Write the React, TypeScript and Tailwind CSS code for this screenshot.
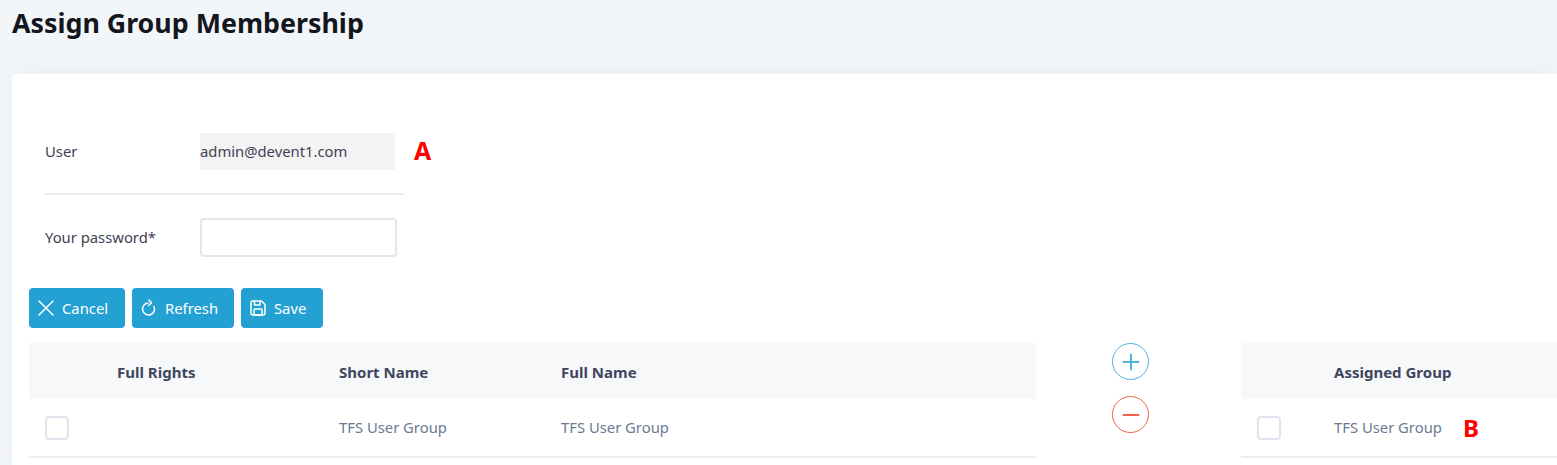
import React from 'react';

const font = "font-['Noto_Sans','Open_Sans',sans-serif]";

const ActionButton: React.FC<{ label: string; width: string; children: React.ReactNode }> = ({ label, width, children }) => (
  <button className={`flex h-10 items-center gap-[7px] rounded-[4px] bg-[#23a1d3] pl-2 text-[14.8px] text-white ${width}`}>
    <svg viewBox="0 0 18 18" fill="none" stroke="currentColor" strokeWidth="1.5" strokeLinecap="round" strokeLinejoin="round" className="h-[18px] w-[18px] shrink-0">
      {children}
    </svg>
    <span>{label}</span>
  </button>
);

const Checkbox = () => (
  <span className="block h-6 w-6 rounded-[4px] border-2 border-[#dfe3ec] bg-white" />
);

export default function App() {
  return (
    <div className={`h-[465px] w-[1557px] overflow-hidden bg-[#f3f6f9] pl-3 ${font}`}>
      <h1 className="h-[74px] pt-[4px] text-[26.8px] leading-[38px] font-bold text-[#14161f]">Assign Group Membership</h1>

      <div className="h-[391px] rounded-tl-[4px] bg-white pt-[59px] pl-[17px] shadow-[0_0_20px_rgba(82,63,105,0.06)]">
        <div className="ml-4 w-[360px]">
          <div className="flex h-[37px] items-center">
            <span className="w-[155px] shrink-0 text-[14.8px] text-[#3f4254]">User</span>
            <span className="flex h-full w-[195px] shrink-0 items-center bg-[#f3f3f3] text-[14.8px] text-[#3f4254]">admin@devent1.com</span>
            <span className="mb-[2px] ml-[19px] shrink-0 text-[25px] leading-none font-bold text-[#ff0000]">A</span>
          </div>
          <div className="mt-[23px] h-[2px] bg-[#ebedf3]" />
          <div className="mt-[23px] flex h-[39px] items-center">
            <span className="w-[155px] shrink-0 text-[14.8px] text-[#3f4254]">Your password*</span>
            <input className="h-full w-[197px] shrink-0 rounded-[4px] border-2 border-[#e4e6ef] bg-white outline-none" />
          </div>
        </div>

        <div className="mt-[31px] flex gap-[7px]">
          <ActionButton label="Cancel" width="w-[96px]">
            <path d="M2 2 L16 16 M16 2 L2 16" />
          </ActionButton>
          <ActionButton label="Refresh" width="w-[102px]">
            <path d="M8 4 A6 6 0 1 0 14 7.5" />
            <path d="M9 1 L11.5 4 L8.5 6.5" />
          </ActionButton>
          <ActionButton label="Save" width="w-[82px]">
            <path d="M3.5 2 H12.5 L16 5.5 V14 A2 2 0 0 1 14 16 H4 A2 2 0 0 1 2 14 V3.5 A1.5 1.5 0 0 1 3.5 2 Z" />
            <path d="M5.5 2 V6 H11 V2" />
            <rect x="5" y="10" width="8" height="6" rx="1" />
          </ActionButton>
        </div>

        <div className="mt-[15px] flex">
          <div className="w-[1007px]">
            <div className="flex h-14 items-center bg-[#f7f8fa] pt-[2px] text-[15px] font-bold text-[#3f4660]">
              <span className="ml-[88px] w-[222px]">Full Rights</span>
              <span className="w-[222px]">Short Name</span>
              <span>Full Name</span>
            </div>
            <div className="flex h-[59px] items-center border-b-2 border-[#ebedf3] text-[14.8px] text-[#6b7a90]">
              <span className="ml-4 w-[294px]">
                <Checkbox />
              </span>
              <span className="w-[222px]">TFS User Group</span>
              <span>TFS User Group</span>
            </div>
          </div>

          <div className="flex w-[205px] flex-col items-center gap-4 pr-[17px] pl-[1px]">
            <span className="flex h-[37px] w-[37px] items-center justify-center rounded-full border-[1.5px] border-[#4fb3e0] text-[#4fb3e0]">
              <svg viewBox="0 0 18 18" stroke="currentColor" strokeWidth="2" strokeLinecap="round" className="h-[18px] w-[18px]">
                <path d="M1.5 9 H16.5 M9 1.5 V16.5" />
              </svg>
            </span>
            <span className="flex h-[37px] w-[37px] items-center justify-center rounded-full border-[1.5px] border-[#f0614f] text-[#f0614f]">
              <svg viewBox="0 0 18 18" stroke="currentColor" strokeWidth="2" strokeLinecap="round" className="h-[18px] w-[18px]">
                <path d="M1.5 9 H16.5" />
              </svg>
            </span>
          </div>

          <div className="flex-1">
            <div className="flex h-14 items-center bg-[#f7f8fa] pt-[2px] pl-[93px] text-[15px] font-bold text-[#3f4660]">Assigned Group</div>
            <div className="flex h-[59px] items-center border-b-2 border-[#ebedf3] text-[14.8px] text-[#6b7a90]">
              <span className="ml-4 w-[77px]">
                <Checkbox />
              </span>
              <span className="w-[129px]">TFS User Group</span>
              <span className="text-2xl leading-none font-bold text-[#ff0000]">B</span>
            </div>
          </div>
        </div>
      </div>
    </div>
  );
}
